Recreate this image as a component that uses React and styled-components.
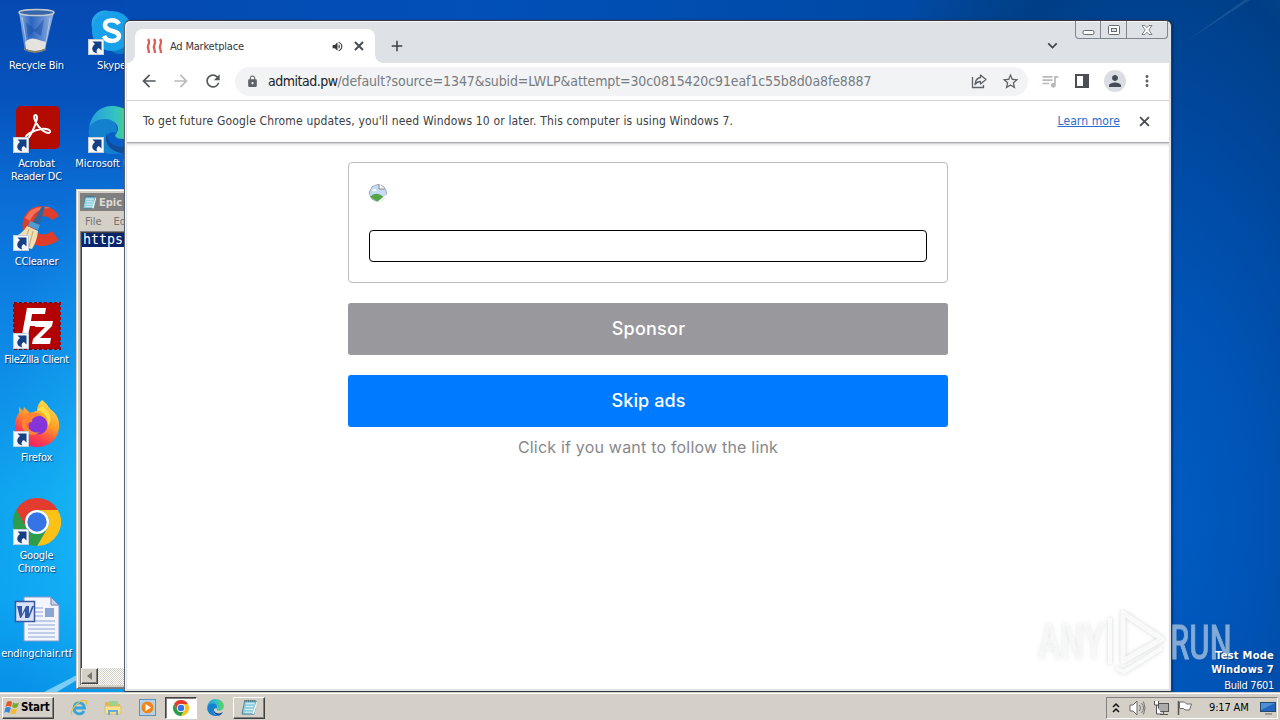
import styled, { createGlobalStyle, css } from "styled-components";
import {
  MdAdd,
  MdArrowBack,
  MdArrowForward,
  MdKeyboardArrowDown,
  MdLock,
  MdMoreVert,
  MdPerson,
  MdQueueMusic,
  MdRefresh,
  MdStarBorder,
  MdVolumeUp,
} from "react-icons/md";

const GlobalStyle = createGlobalStyle`
  * {
    box-sizing: border-box;
  }
  body {
    margin: 0;
    overflow: hidden;
    font-family: "DejaVu Sans Condensed", "DejaVu Sans", sans-serif;
    font-stretch: condensed;
  }
  svg {
    display: block;
    flex-shrink: 0;
  }
`;

const Screen = styled.div`
  width: 1280px;
  height: 720px;
  display: flex;
  flex-direction: column;
  overflow: hidden;
`;

/* ---------- desktop ---------- */

const Desktop = styled.main`
  position: relative;
  flex: 1;
  min-height: 0;
  overflow: hidden;
  background:
    radial-gradient(
        ellipse 110px 330px at 110px 500px,
        rgba(40, 215, 255, 0.45) 0,
        rgba(30, 200, 255, 0.2) 55%,
        rgba(20, 190, 255, 0) 100%
      )
      0 0 / 124px 100% no-repeat,
    linear-gradient(
        180deg,
        #0649b2 0,
        #0653bd 100px,
        #0a6cd4 190px,
        #0d7fe2 290px,
        #0e92e9 400px,
        #10a5ef 500px,
        #0da4f1 600px,
        #0790e8 692px
      )
      0 0 / 124px 100% no-repeat,
    radial-gradient(
      ellipse 300px 620px at 1150px 520px,
      #005dc4 0,
      #0054b6 35%,
      #00489f 65%,
      #003f87 90%,
      rgba(5, 67, 137, 0) 115%
    ),
    linear-gradient(90deg, #0649b2 0, #0150b8 500px, #004aa6 900px, #0b4788 1280px);
`;
const Streak = styled.svg`
  position: absolute;
  left: 0;
  top: 0;
`;
const IconGrid = styled.div`
  position: relative;
  display: grid;
  grid-template-rows: repeat(7, 98px);
  grid-auto-columns: 75px;
  grid-auto-flow: column;
  padding-top: 8px;
  width: 150px;
  margin-left: -1px;
`;
const Shortcut = styled.div`
  display: flex;
  flex-direction: column;
  align-items: center;
  color: #fff;
  font-size: 11px;
  line-height: 13px;
  letter-spacing: ${(p) => p.$spacing || "-0.2px"};
  text-align: center;
  text-shadow: 1px 1px 1px rgba(0, 20, 70, 0.7);
  white-space: nowrap;

  svg {
    margin: 0 0 3px 1px;
  }
`;

/* ---------- notepad ---------- */

const Notepad = styled.section`
  position: absolute;
  left: 76px;
  top: 189px;
  width: 200px;
  height: 500px;
  padding: 3px;
  display: flex;
  flex-direction: column;
  background: #d4d0c8;
  border: 1px solid #777;
  border-top-color: #d4d0c8;
  border-left-color: #d4d0c8;
  box-shadow: inset 1px 1px #fff, inset -1px -1px #808080;
`;
const NotepadTitle = styled.div`
  display: flex;
  align-items: center;
  gap: 2px;
  height: 18px;
  padding-left: 2px;
  background: #808080;
  color: #dedad2;
  font-size: 11px;
  font-weight: bold;
`;
const NotepadMenu = styled.div`
  display: flex;
  align-items: center;
  gap: 12px;
  height: 20px;
  padding-left: 5px;
  color: #77746e;
  font-size: 11px;
`;
const NotepadText = styled.div`
  flex: 1;
  padding: 1px 0 0 1px;
  background: #fff;
  border: 1px solid #808080;
  border-bottom: 0;
  box-shadow: inset 1px 1px #404040;
`;
const Selection = styled.div`
  height: 14px;
  padding-left: 1px;
  background: #0a246a;
  color: #fff;
  font: 13.3px/13px "DejaVu Sans Mono", monospace;
`;
const ScrollBar = styled.div`
  height: 17px;
  border-left: 1px solid #808080;
  background: repeating-conic-gradient(#d4d0c8 0 25%, #fff 0 50%) 0 0 / 2px 2px;
`;
const ScrollButton = styled.div`
  width: 17px;
  height: 16px;
  display: grid;
  place-items: center;
  background: #d4d0c8;
  border: 1px solid #404040;
  border-top-color: #eee;
  border-left-color: #eee;
  box-shadow: inset -1px -1px #808080;
`;

/* ---------- browser ---------- */

const Browser = styled.section`
  position: absolute;
  left: 124px;
  top: 20px;
  width: 1048px;
  height: 672px;
  display: flex;
  flex-direction: column;
  border: 1px solid #343a43;
  border-left-color: #59636c;
  border-radius: 6px 6px 2px 2px;
  background: #dee1e6;
  padding: 0 2px 2px 2px;
  box-shadow: inset 1px 1px #f5f7f9, 1px 0 2px rgba(0, 20, 60, 0.5);
`;
const TabStrip = styled.div`
  display: flex;
  height: 42px;
  padding: 8px 0 0 8px;
`;
const Tab = styled.div`
  position: relative;
  width: 240px;
  display: flex;
  align-items: center;
  padding: 0 11px 0 11px;
  background: #fff;
  border-radius: 8px 8px 0 0;
  color: #34373b;
  font-size: 11px;

  &::before,
  &::after {
    content: "";
    position: absolute;
    bottom: 0;
    width: 8px;
    height: 8px;
  }
  &::before {
    left: -8px;
    background: radial-gradient(circle at 0 0, transparent 7.5px, #fff 8px);
  }
  &::after {
    right: -8px;
    background: radial-gradient(circle at 100% 0, transparent 7.5px, #fff 8px);
  }
`;
const TabTitle = styled.span`
  flex: 1;
  margin-left: 6px;
  letter-spacing: -0.2px;
`;
const TabSound = styled.span`
  margin-right: 10px;
`;
const NewTab = styled.div`
  padding: 8px 0 0 13px;
  color: #3c4043;
`;
const TabSearch = styled.div`
  margin: 7px 13px 0 auto;
  color: #3c4043;
`;
const WindowButtons = styled.div`
  display: flex;
  width: 93px;
  height: 18px;
  margin: -8px 1px 0 0;
  border: 1px solid #80858c;
  border-top: 0;
  border-radius: 0 0 4px 4px;
`;
const WindowButton = styled.div`
  flex: ${(p) => p.$grow || 1};
  display: grid;
  place-items: center;
  & + & {
    border-left: 1px solid #80858c;
  }
`;
const Toolbar = styled.div`
  display: flex;
  align-items: center;
  height: 38px;
  padding: 0 13px 1px 12px;
  background: #fff;
  border-bottom: 1px solid #d2d4d7;
  color: #5f6368;
`;
const NavButtons = styled.div`
  display: flex;
  gap: 12px;
  color: #54585d;
  svg:nth-child(2) {
    color: #b9bbbe;
  }
`;
const Omnibox = styled.div`
  display: flex;
  align-items: center;
  width: 793px;
  height: 29px;
  margin-left: 12px;
  padding: 0 8px 0 11px;
  border-radius: 15px;
  background: #f1f3f4;
`;
const Url = styled.span`
  flex: 1;
  margin-left: 9px;
  color: #777b80;
  font-size: 14px;
  letter-spacing: -0.12px;
  white-space: nowrap;
  b {
    color: #202124;
    font-weight: normal;
    letter-spacing: -0.5px;
  }
`;
const OmniboxActions = styled.div`
  display: flex;
  align-items: center;
  gap: 14px;
`;
const ToolbarActions = styled.div`
  display: flex;
  align-items: center;
  flex: 1;
  justify-content: space-between;
  margin-left: 12px;
`;
const Avatar = styled.div`
  display: grid;
  place-items: center;
  width: 22px;
  height: 22px;
  margin: 0 -3px 0 -1px;
  border-radius: 50%;
  background: #dadde2;
  color: #454c57;
`;
const InfoBar = styled.div`
  display: flex;
  align-items: center;
  height: 41px;
  padding: 0 19px 1px 16px;
  background: #fff;
  color: #3c4043;
  font-size: 12px;
`;
const InfoText = styled.span`
  flex: 1;
  letter-spacing: 0.16px;
`;
const InfoLink = styled.a`
  margin-right: 19px;
  color: #2a6dcd;
  letter-spacing: 0.1px;
  text-decoration: underline;
`;
const Page = styled.div`
  flex: 1;
  display: flex;
  flex-direction: column;
  align-items: center;
  padding-top: 20px;
  background: #fff;
  box-shadow: inset 0 1px #a9abad, inset 0 2px #d5d6d8, inset 0 4px 3px -1px #e3e3e4;
  font-family: Inter, sans-serif;
`;
const AdCard = styled.div`
  display: flex;
  flex-direction: column;
  width: 600px;
  height: 121px;
  padding: 21px 20px 20px;
  border: 1px solid #bdbdbd;
  border-radius: 4px;
`;
const BrokenImage = styled.div`
  width: 18px;
  height: 18px;
  border-radius: 50%;
  overflow: hidden;
`;
const AdLink = styled.div`
  height: 32px;
  margin-top: auto;
  border: 1px solid #000;
  border-radius: 4px;
`;
const PageButton = styled.div`
  display: flex;
  align-items: center;
  justify-content: center;
  width: 600px;
  height: 52px;
  margin-top: 20px;
  padding: 0 0 1px 1px;
  border-radius: 3px;
  background: ${(p) => p.$color};
  color: #fff;
  font-size: 18px;
  font-weight: 450;
  letter-spacing: ${(p) => p.$spacing};
`;
const Hint = styled.div`
  margin-top: 10px;
  color: #88888b;
  font-size: 16px;
  line-height: 20px;
  letter-spacing: 0.2px;
`;

/* ---------- overlays on the wallpaper ---------- */

const Watermark = styled.svg`
  position: absolute;
  left: 1030px;
  top: 600px;
  filter: drop-shadow(0 0 2px rgba(70, 75, 80, 0.28));
`;
const BuildInfo = styled.div`
  position: absolute;
  right: 6px;
  bottom: -1px;
  color: #fff;
  text-align: right;
  font-size: 11px;
  line-height: 14px;
  text-shadow: 1px 1px 1px #003272;
  p {
    margin: 2px 0 0;
    letter-spacing: -0.35px;
  }
  b {
    display: block;
    letter-spacing: 0.25px;
  }
`;

/* ---------- taskbar ---------- */

const raised = css`
  border: 1px solid #404040;
  border-top-color: #fff;
  border-left-color: #fff;
  box-shadow: inset -1px -1px #808080;
`;
const Taskbar = styled.footer`
  display: flex;
  align-items: center;
  height: 28px;
  padding: 3px 2px 0;
  background: #d4d0c8;
  box-shadow: inset 0 1px #d4d0c8, inset 0 2px #fff;
`;
const StartButton = styled.div`
  ${raised}
  display: flex;
  align-items: center;
  gap: 1px;
  width: 52px;
  height: 22px;
  padding: 0 0 1px 1px;
  font-size: 11.5px;
  font-weight: bold;
  letter-spacing: -0.2px;
  margin-right: 8px;
`;
const TaskSlot = styled.div`
  display: grid;
  place-items: center;
  width: 32px;
  height: 22px;
  margin: 0 1px;
  ${(p) => p.$open && raised}
  ${(p) =>
    p.$active &&
    css`
      background: #fff;
      border: 1px solid #fff;
      border-top-color: #404040;
      border-left-color: #404040;
      box-shadow: inset 1px 1px #808080;
    `}
`;
const Tray = styled.div`
  display: flex;
  align-items: center;
  width: 172px;
  height: 22px;
  margin-left: auto;
  padding: 0 1px 0 5px;
  border: 1px solid #fff;
  border-top-color: #808080;
  border-left-color: #808080;
  font-size: 11px;
`;
const TrayIcons = styled.div`
  display: flex;
  align-items: center;
  gap: 7px;
  margin-left: 9px;
`;
const Clock = styled.span`
  flex: 1;
  padding-left: 16px;
  letter-spacing: -0.15px;
  white-space: nowrap;
`;

/* ---------- drawings ---------- */

const ShortcutArrow = () => (
  <g>
    <rect x="0.5" y="31.5" width="15" height="15" fill="#f5f7fa" stroke="#c5cdd8" />
    <path
      d="M4.500 33.500h9v9l-2.600-2.600c-2.600 1.300-2.900 3.200-1.600 5.600-6-1.300-6.500-6.300-2.300-9.500z"
      fill="#163f83"
    />
  </g>
);

const Cross = ({ size, weight }) => (
  <svg width={size} height={size} viewBox="0 0 10 10">
    <path d="M1 1l8 8M9 1L1 9" stroke="#4a4e53" strokeWidth={weight} />
  </svg>
);

const RecycleBin = () => (
  <svg width="48" height="48" viewBox="0 0 48 48">
    <defs>
      <linearGradient id="bin">
        <stop offset="0" stopColor="#9ebbe3" stopOpacity=".9" />
        <stop offset=".35" stopColor="#3a6fc3" stopOpacity=".75" />
        <stop offset="1" stopColor="#a9c2e6" stopOpacity=".9" />
      </linearGradient>
    </defs>
    <path d="M6 4l5.500 36q12 6 21 0L41 4z" fill="url(#bin)" />
    <path d="M12 34q5-5 11-3t10 3l-1 7q-10 5-19 0z" fill="#e5e3df" />
    <path d="M11 40q11 6 22 0v2q-11 6-22 0z" fill="#827f75" />
    <path d="M13 14l9 8 9-11-3 17-7-5-6 7z" fill="#1b50ab" opacity=".55" />
    <ellipse cx="23.500" cy="4.500" rx="17.500" ry="3" fill="#3766aa" stroke="#c6cbd0" strokeWidth="1.500" />
    <path d="M9 9l4 24M37 10l-4 24" stroke="#d9e5f5" opacity=".6" />
  </svg>
);

const Acrobat = () => (
  <svg width="48" height="48" viewBox="0 0 48 48">
    <rect x="3" y="0" width="44" height="43" rx="5" fill="#b30b00" />
    <path
      d="M14 31c-2-3 9-8 15-9 6-.8 10 1 9 3-1.500 2.500-7-.5-11-5-5-6-6-12-3.500-12 3 0 1 8-2.500 15S15.500 33 14 31z"
      transform="translate(-1 1)"
      fill="none"
      stroke="#fff"
      strokeWidth="2"
    />
    <ShortcutArrow />
  </svg>
);

const CCleaner = () => (
  <svg width="48" height="48" viewBox="0 0 48 48">
    <path
      d="M46 12C39-2 14-2 10 17 6 38 26 50 46 36l-7-9c-8 7-18 3-17-6 1-9 12-12 17-5z"
      fill="#df3d2a"
    />
    <path d="M12 14Q20-1 38 4q-16 0-21 13z" fill="#f4725b" />
    <path d="M29 2l3 1-6 20-7-3z" fill="#31659b" />
    <path d="M17 17l10 4-2 5-10-4z" fill="#4d9dd2" />
    <path d="M14 22l11 5q-1 10-6 18Q8 43 1 33q8-3 13-11z" fill="#eee0b4" />
    <path d="M16 25l-5 14m9-12l-4 16" stroke="#c9a961" />
    <ShortcutArrow />
  </svg>
);

const FileZilla = () => (
  <svg width="48" height="48" viewBox="0 0 48 48">
    <rect x="1" y="1" width="46" height="46" fill="#b30000" stroke="#960000" strokeWidth="2" strokeDasharray="3 2" />
    <path d="M14 6h19l-1 6H19l-1 7h10l-1 5H17l-3 14H8z" fill="#fff" />
    <path d="M23 19h17l-1 5-12 12h11l-1 6H19l1-5 12-12h-10z" fill="#fff" />
    <ShortcutArrow />
  </svg>
);

const Firefox = () => (
  <svg width="48" height="48" viewBox="0 0 48 48">
    <defs>
      <linearGradient id="fox" x1=".8" y1="0" x2=".3" y2="1">
        <stop offset="0" stopColor="#ffe64a" />
        <stop offset=".45" stopColor="#ff9a27" />
        <stop offset=".75" stopColor="#fd4050" />
        <stop offset="1" stopColor="#e8206c" />
      </linearGradient>
    </defs>
    <path
      d="M29 0c3 2 6 5 7 8 1-1 1 0 1 1 7 4 10 12 9 19-1 11-10 19-22 19S2 38 2 26c0-6 2-11 4-13V7l4 4 1-4 6 6c4-1 5-2 7-2 0-5 2-8 5-11z"
      fill="url(#fox)"
    />
    <circle cx="25" cy="25" r="9.500" fill="#8434d9" />
    <path d="M10 16c6-5 14-4 20 0-6-1-10 2-11 4 2 2-3 3-6 3 1 7 8 11 14 9-9 7-20 0-18-10z" fill="#ff8330" />
    <path d="M24 10c7 1 12 8 11 16 5-7 2-15-6-20z" fill="#ffdf43" />
    <ShortcutArrow />
  </svg>
);

const ChromeLogo = ({ size, arrow }) => (
  <svg width={size} height={size} viewBox="0 0 48 48">
    <path d="M3.200 12A24 24 0 0 1 44.800 12H24A12 12 0 0 0 13.600 30z" fill="#e33b2e" />
    <path d="M44.800 12A24 24 0 0 1 24 48L34.400 30A12 12 0 0 0 24 12z" fill="#fbc116" />
    <path d="M24 48A24 24 0 0 1 3.200 12L13.600 30A12 12 0 0 0 34.400 30z" fill="#2d9d49" />
    <circle cx="24" cy="24" r="12" fill="#fff" />
    <circle cx="24" cy="24" r="9.700" fill="#3474e6" />
    {arrow && <ShortcutArrow />}
  </svg>
);

const WordFile = () => (
  <svg width="48" height="48" viewBox="0 0 48 48">
    <path d="M11 1h27l8 8v36H11z" fill="#f2f5fd" stroke="#8699c4" />
    <path d="M38 1v8h8z" fill="#c5d2ed" stroke="#6e83b3" />
    <path d="M15 12h15M15 16h15M15 20h15M15 25h27M15 29h27M15 33h27M15 37h27M15 41h27" stroke="#8ea5d2" />
    <rect x="32" y="12" width="9" height="9" fill="#8ba5d2" />
    <rect x="2.500" y="5.500" width="19" height="20" fill="#dbe4f7" stroke="#3958a0" strokeWidth="1.500" />
    <path d="M4 10h5l0 8 4-8h3v8l3-8h2l-5 12h-4v-7l-4 7H7z" fill="#3458a8" />
  </svg>
);

const Skype = () => (
  <svg width="48" height="48" viewBox="0 0 48 48">
    <circle cx="17" cy="16" r="13.500" fill="#28a8ea" />
    <circle cx="32" cy="32" r="14" fill="#0a79c9" />
    <circle cx="24" cy="23" r="20" fill="#18a0e8" />
    <path
      d="M31 16c-3-5-14-5-14 1 0 7.500 14 4.500 14 11 0 6-12 7-15 0"
      fill="none"
      stroke="#fff"
      strokeWidth="4.500"
    />
    <ShortcutArrow />
  </svg>
);

const EdgeLogo = ({ size, arrow }) => (
  <svg width={size} height={size} viewBox="0 0 48 48">
    <defs>
      <linearGradient id="edgeTop">
        <stop offset="0" stopColor="#279bdb" />
        <stop offset=".55" stopColor="#32c3c4" />
        <stop offset="1" stopColor="#62d552" />
      </linearGradient>
    </defs>
    <path d="M1 22C3 8 12 0 24 0c14 0 24 10 24 20 0 9-7 13-13 13-7 0-9-3-7-5 6-8-2-14-10-14C9 14 3 18 1 22z" fill="url(#edgeTop)" />
    <path d="M1 22c3-6 9-9 16-9 10 0 14 8 11 14-4-3-10 1-10 6 0 8 8 13 16 14C15 52-2 39 1 22z" fill="#1481cf" />
    <path d="M19 27c-4 9 4 19 15 20 5-2 8-5 11-10-11 7-26 4-26-10z" fill="#124d98" />
    {arrow && <ShortcutArrow />}
  </svg>
);

const NoteIcon = ({ size }) => (
  <svg width={size} height={size} viewBox="0 0 18 18">
    <path d="M4 2h12l-2 14H1z" fill="#8dcddd" stroke="#4b8293" />
    <path d="M5 5h9M5 8h8M4 11h9M4 14h8" stroke="#dff4f5" />
    <path d="M4 1v2m2-2v2m2-2v2m2-2v2m2-2v2m2-2v2" stroke="#445f65" strokeWidth=".8" />
    <path d="M16 3l1 1-3 12h-2z" fill="#e9f5f5" />
  </svg>
);

const AdFavicon = () => (
  <svg width="18" height="16" viewBox="0 0 18 16" fill="none" stroke="#e25d54" strokeWidth="2.300">
    <path d="M2 1c3 4-1 6 0 9s1 3 1 5M8 1c3 4-1 6 0 9s1 3 1 5M14 1c3 4-1 6 0 9s1 3 1 5" />
  </svg>
);

const ShareIcon = () => (
  <svg width="16" height="16" viewBox="0 0 16 16" fill="none" stroke="#5f6368" strokeWidth="1.300">
    <path d="M1.500 4v10.500h11V12" />
    <path d="M9.500 2L15 6.500 9.500 11V8.500C7 8.500 5.500 9.500 4 11.500c.3-4 2.500-6.500 5.500-7z" strokeLinejoin="round" />
  </svg>
);

const SidePanelIcon = () => (
  <svg width="14" height="14" viewBox="0 0 14 14">
    <path d="M0 0h14v14H0zM2 2v10h6V2z" fill="#4b4f54" fillRule="evenodd" />
  </svg>
);

const BrokenPicture = () => (
  <svg width="18" height="18" viewBox="0 0 18 18">
    <circle cx="9" cy="9" r="8.500" fill="#c8dbf4" stroke="#9b9fa4" />
    <path d="M1 13q6-7 15 1l-7 4z" fill="#52a647" />
    <path d="M3 7q2-4 5 0z" fill="#fff" />
    <path d="M10 0v5h6" fill="#fff" stroke="#858a90" />
    <path d="M18 6v4L8 18h3l7-5z" fill="#fff" />
  </svg>
);

const WindowsFlag = () => (
  <svg width="16" height="16" viewBox="0 0 16 16">
    <path d="M3 3q3-2 5 0L7 8Q4 6 1.500 8z" fill="#e3572b" />
    <path d="M9 3.500q3 2 6 0L13.500 8Q11 10 8 8z" fill="#73ac35" />
    <path d="M1.300 9q3-2 5.500 0l-1.500 5q-3-2-5 0z" fill="#3985d7" />
    <path d="M7.700 9.300q3 1.700 5.600 0l-1.500 5q-3 1.500-5.500 0z" fill="#f4bc2d" />
  </svg>
);

const ExplorerE = () => (
  <svg width="18" height="18" viewBox="0 0 18 18" fill="none">
    <path d="M14 12c-3 5-10 3-10-3 0-7 10-7 10.500 0H5" stroke="#35a5dc" strokeWidth="2.800" />
    <path d="M2 16C-1 12 10-1 16 2c1 .7 1 2 0 3.500" stroke="#efbd3d" strokeWidth="1.300" />
  </svg>
);

const FolderIcon = () => (
  <svg width="18" height="16" viewBox="0 0 18 16">
    <path d="M1 2h6l1 2h8v9H1z" fill="#dfb950" />
    <path d="M5 1h9v5H5z" fill="#9bd391" />
    <path d="M1 6h16v8H1z" fill="#f6df8d" stroke="#d9b65a" strokeWidth=".7" />
    <path d="M4 15v-5h10v5h-2v-3H6v3z" fill="#65add9" />
  </svg>
);

const MediaIcon = () => (
  <svg width="17" height="17" viewBox="0 0 17 17">
    <rect x=".5" y=".5" width="16" height="16" fill="#b4d2e9" stroke="#5b91bd" />
    <circle cx="8.500" cy="8.500" r="6" fill="#f08519" />
    <path d="M6.500 5v7l5.500-3.500z" fill="#fff" />
  </svg>
);

const shortcuts = [
  { icon: <RecycleBin />, label: "Recycle Bin" },
  { icon: <Acrobat />, label: <>Acrobat<br />Reader DC</> },
  { icon: <CCleaner />, label: "CCleaner" },
  { icon: <FileZilla />, label: "FileZilla Client", spacing: "-0.3px" },
  { icon: <Firefox />, label: "Firefox" },
  { icon: <ChromeLogo size={48} arrow />, label: <>Google<br />Chrome</> },
  { icon: <WordFile />, label: "endingchair.rtf", spacing: "-0.1px" },
  { icon: <Skype />, label: "Skype" },
  { icon: <EdgeLogo size={48} arrow />, label: "Microsoft Edge", spacing: "-0.05px" },
];

const NotepadWindow = () => (
  <Notepad>
    <NotepadTitle>
      <NoteIcon size={15} />
      Epic
    </NotepadTitle>
    <NotepadMenu>
      <span>File</span>
      <span>Edit</span>
    </NotepadMenu>
    <NotepadText>
      <Selection>https</Selection>
    </NotepadText>
    <ScrollBar>
      <ScrollButton>
        <svg width="5" height="8">
          <path d="M5 0v8L0 4z" fill="#77746e" />
        </svg>
      </ScrollButton>
    </ScrollBar>
  </Notepad>
);

const BrowserWindow = () => (
  <Browser>
    <TabStrip>
      <Tab>
        <AdFavicon />
        <TabTitle>Ad Marketplace</TabTitle>
        <TabSound>
          <MdVolumeUp size={13} />
        </TabSound>
        <Cross size={10} weight={2} />
      </Tab>
      <NewTab>
        <MdAdd size={18} />
      </NewTab>
      <TabSearch>
        <MdKeyboardArrowDown size={19} />
      </TabSearch>
      <WindowButtons>
        <WindowButton>
          <svg width="13" height="12" viewBox="0 0 13 12">
            <rect x="1" y="6.500" width="11" height="4" rx="1.500" fill="#fff" stroke="#646970" />
          </svg>
        </WindowButton>
        <WindowButton>
          <svg width="12" height="10" viewBox="0 0 12 10">
            <rect x=".5" y=".5" width="11" height="9" rx="1" fill="#fff" stroke="#646970" />
            <rect x="3.500" y="3.500" width="5" height="3" fill="#dee1e6" stroke="#646970" />
          </svg>
        </WindowButton>
        <WindowButton $grow={1.65}>
          <svg width="12" height="10" viewBox="0 0 12 10">
            <path
              d="M1 .5h3l2 2.300L8 .5h3L7.800 5 11 9.500H8L6 7.200 4 9.500H1L4.200 5z"
              fill="#fff"
              stroke="#646970"
              strokeWidth=".8"
            />
          </svg>
        </WindowButton>
      </WindowButtons>
    </TabStrip>
    <Toolbar>
      <NavButtons>
        <MdArrowBack size={20} />
        <MdArrowForward size={20} />
        <MdRefresh size={20} />
      </NavButtons>
      <Omnibox>
        <MdLock size={13} />
        <Url>
          <b>admitad.pw</b>
          /default?source=1347&amp;subid=LWLP&amp;attempt=30c0815420c91eaf1c55b8d0a8fe8887
        </Url>
        <OmniboxActions>
          <ShareIcon />
          <MdStarBorder size={19} />
        </OmniboxActions>
      </Omnibox>
      <ToolbarActions>
        <MdQueueMusic size={20} color="#b7babd" />
        <SidePanelIcon />
        <Avatar>
          <MdPerson size={18} />
        </Avatar>
        <MdMoreVert size={18} />
      </ToolbarActions>
    </Toolbar>
    <InfoBar>
      <InfoText>
        To get future Google Chrome updates, you'll need Windows 10 or later. This computer is using
        Windows 7.
      </InfoText>
      <InfoLink>Learn more</InfoLink>
      <Cross size={11} weight={1.7} />
    </InfoBar>
    <Page>
      <AdCard>
        <BrokenImage>
          <BrokenPicture />
        </BrokenImage>
        <AdLink />
      </AdCard>
      <PageButton $color="#98989d" $spacing="0.25px">
        Sponsor
      </PageButton>
      <PageButton $color="#007aff" $spacing="0.1px">
        Skip ads
      </PageButton>
      <Hint>Click if you want to follow the link</Hint>
    </Page>
  </Browser>
);

const AnyRunMark = () => (
  <Watermark width="210" height="80" viewBox="0 0 210 80">
    <g
      fill="#fff"
      stroke="#fff"
      strokeWidth="1"
      opacity=".5"
      fontFamily="Roboto, sans-serif"
      fontSize="49"
    >
      <text x="8" y="58" textLength="66" lengthAdjust="spacingAndGlyphs">
        ANY
      </text>
      <text x="140" y="59" textLength="62" lengthAdjust="spacingAndGlyphs">
        RUN
      </text>
    </g>
    <g fill="none" stroke="#fff" strokeOpacity=".8" strokeWidth="5" strokeLinejoin="round">
      <path d="M93 13v48l39-22z" />
      <path d="M80 18v46M86 68l8 4 38-24" strokeWidth="4" />
    </g>
  </Watermark>
);

const TrayArea = () => (
  <Tray>
    <svg width="8" height="12" viewBox="0 0 8 12" fill="none" stroke="#111" strokeWidth="1.500">
      <path d="M1 5l3-3 3 3M1 10l3-3 3 3" />
    </svg>
    <TrayIcons>
      <svg width="17" height="16" viewBox="0 0 17 16">
        <path d="M1 5h3l4-4v14l-4-4H1z" fill="#fff" stroke="#6b6b6b" />
        <path d="M10.500 5q2 3 0 6M12.500 3q4 5 0 10M14.500 1.500q3 6.500 0 13" fill="none" stroke="#77746f" />
      </svg>
      <svg width="17" height="16" viewBox="0 0 17 16">
        <rect x="5.500" y="3.500" width="10" height="8" fill="#ababab" stroke="#555" />
        <path d="M7 14.500h8M10.500 12v2" stroke="#555" />
        <path d="M1.500 1v4h4V1M3.500 5v9h5" fill="#fff" stroke="#555" />
      </svg>
      <svg width="16" height="16" viewBox="0 0 16 16">
        <path d="M1.500 1v14" stroke="#555" strokeWidth="1.500" />
        <path d="M2.500 2h5l2 2h5l-2 6H8L6.500 8.500h-4z" fill="#fff" stroke="#6b6b6b" />
      </svg>
    </TrayIcons>
    <Clock>9:17 AM</Clock>
    <svg width="16" height="14" viewBox="0 0 16 14">
      <rect x=".5" y="1.500" width="15" height="9" fill="#2365bb" stroke="#24496f" />
      <path d="M1 2h14L1 9z" fill="#4c8ed8" />
      <path d="M5 13h7" stroke="#666" />
    </svg>
  </Tray>
);

const App = () => {
  return (
    <Screen>
      <GlobalStyle />
      <Desktop>
        <Streak width="1280" height="692">
          <path d="M44 692L77 675v5L57 692z" fill="#b6eaff" opacity=".65" />
          <path d="M1185 42L1244 0h6z" fill="#5b8bbd" opacity=".22" />
        </Streak>
        <IconGrid>
          {shortcuts.map((item, i) => (
            <Shortcut key={i} $spacing={item.spacing}>
              {item.icon}
              <span>{item.label}</span>
            </Shortcut>
          ))}
        </IconGrid>
        <NotepadWindow />
        <BrowserWindow />
        <AnyRunMark />
        <BuildInfo>
          <b>Test Mode</b>
          <b>Windows 7</b>
          <p>Build 7601</p>
        </BuildInfo>
      </Desktop>
      <Taskbar>
        <StartButton>
          <WindowsFlag />
          Start
        </StartButton>
        <TaskSlot>
          <ExplorerE />
        </TaskSlot>
        <TaskSlot>
          <FolderIcon />
        </TaskSlot>
        <TaskSlot>
          <MediaIcon />
        </TaskSlot>
        <TaskSlot $active>
          <ChromeLogo size={16} />
        </TaskSlot>
        <TaskSlot>
          <EdgeLogo size={17} />
        </TaskSlot>
        <TaskSlot $open>
          <NoteIcon size={17} />
        </TaskSlot>
        <TrayArea />
      </Taskbar>
    </Screen>
  );
};

export default App;
